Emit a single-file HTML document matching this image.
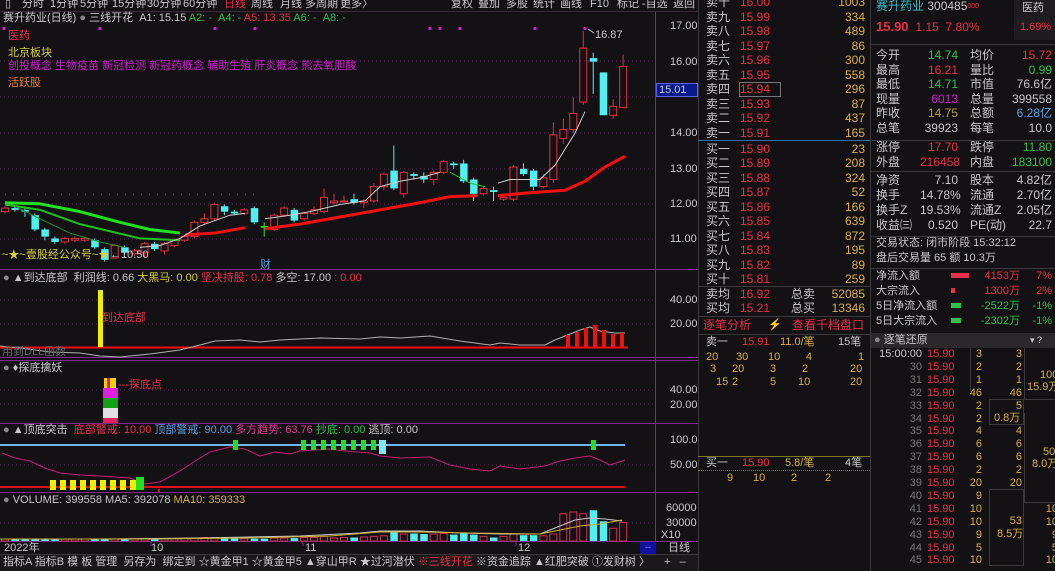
<!DOCTYPE html>
<html><head><meta charset="utf-8">
<style>
*{margin:0;padding:0;box-sizing:border-box}
body{width:1055px;height:571px;background:#131114;overflow:hidden;position:relative;font-family:"Liberation Sans","Noto Sans CJK SC",sans-serif;font-size:11px;color:#c8c8c8}
.t{position:absolute;white-space:nowrap;line-height:13px}
.r{color:#e8304a}.g{color:#2fbf4f}.y{color:#d8b048}.w{color:#c8c8c8}.c{color:#38c0c8}.m{color:#d020d0}.b{color:#5aa0e0}
.hl{position:absolute;height:1px}
.vl{position:absolute;width:1px}
.rt{text-align:right}
</style></head><body>
<div style="position:absolute;left:0;top:0;width:698px;height:12px;background:#131114"></div>
<div id="tb"></div>
<div class="hl" style="left:0;top:11px;width:698px;background:#3a2a3a"></div>

<svg id="ch" width="698" height="571" style="position:absolute;left:0;top:0"></svg>

<div class="t w" style="left:3px;top:12px">赛升药业(日线) <span style="color:#888">●</span> 三线开花 &nbsp;A1: 15.15 <span class="g">A2: - &nbsp;A4: -</span> <span class="r">A5: 13.35</span> <span class="g">A6: - &nbsp;A8: -</span></div>
<div class="t r" style="left:8px;top:30px">医药</div>
<div class="t" style="left:8px;top:47px;color:#d8d040">北京板块</div>
<div class="t m" style="left:8px;top:60px">创投概念 生物疫苗 新冠检测 新冠药概念 辅助生殖 肝炎概念 熊去氧胆酸</div>
<div class="t" style="left:8px;top:77px;color:#e08030">活跃股</div>
<div class="t w" style="left:595px;top:29px">16.87</div>
<div class="t" style="left:2px;top:249px;color:#d8d040">~★~壹股经公众号~★</div>
<div class="t w" style="left:110px;top:249px">←10.50</div>
<div class="t b" style="left:260px;top:259px">财</div>
<div class="t w" style="left:670px;top:20px">17.00</div>
<div class="t w" style="left:670px;top:56px">16.00</div>
<div style="position:absolute;left:656px;top:83px;width:42px;height:14px;background:#0a1a8a;border:1px solid #6060e0"></div>
<div class="t w" style="left:659px;top:84px">15.01</div>
<div class="t w" style="left:670px;top:127px">14.00</div>
<div class="t w" style="left:670px;top:163px">13.00</div>
<div class="t w" style="left:670px;top:198px">12.00</div>
<div class="t w" style="left:670px;top:233px">11.00</div>

<div class="t w" style="left:3px;top:272px"><span style="color:#888">●</span> ▲到达底部 &nbsp;利润线: 0.66 <span style="color:#d8d040">大黑马: 0.00</span> <span class="r">坚决持股: 0.78</span> 多空: 17.00 <span class="r">: 0.00</span></div>
<div class="t r" style="left:102px;top:312px">到达底部</div>
<div class="t" style="left:2px;top:346px;color:#666">用到DLL函数</div>
<div class="t w" style="left:670px;top:294px">40.00</div>
<div class="t w" style="left:670px;top:318px">20.00</div>
<div class="t w" style="left:3px;top:362px"><span style="color:#888">●</span> ♦探底擒妖</div>
<div class="t r" style="left:118px;top:379px">---探底点</div>
<div class="t w" style="left:670px;top:384px">40.00</div>
<div class="t w" style="left:670px;top:399px">20.00</div>
<div class="t w" style="left:3px;top:424px"><span style="color:#888">●</span> ▲顶底突击 &nbsp;<span class="r">底部警戒: 10.00</span> <span class="b">顶部警戒: 90.00</span> <span style="color:#e04090">多方趋势: 63.76</span> <span class="g">抄底: 0.00</span> 逃顶: 0.00</div>
<div class="t w" style="left:670px;top:434px">100.0</div>
<div class="t w" style="left:670px;top:459px">50.00</div>
<div class="t w" style="left:3px;top:494px"><span style="color:#888">●</span> VOLUME: 399558 MA5: 392078 <span class="y">MA10: 359333</span></div>
<div class="t w" style="left:666px;top:502px">60000</div>
<div class="t w" style="left:666px;top:517px">30000</div>
<div class="t w" style="left:661px;top:529px">X10</div>
<div class="t w" style="left:4px;top:542px">2022年</div>
<div class="t w" style="left:151px;top:542px">10</div>
<div class="t w" style="left:305px;top:542px">11</div>
<div class="t w" style="left:518px;top:542px">12</div>
<div style="position:absolute;left:640px;top:542px;width:16px;height:12px;background:#1010a0;color:#88f;font-size:9px;text-align:center">--</div>
<div class="t w" style="left:668px;top:542px">日线</div>
<div style="position:absolute;left:0;top:555px;width:698px;height:16px;background:#1a181b"></div>
<div class="t w" style="left:3px;top:556px">指标A 指标B 模 板 管理 &nbsp;另存为 &nbsp;绑定到 ☆黄金甲1 ☆黄金甲5 ▲穿山甲R ★过河潜伏 <span class="r">※三线开花</span> ※资金追踪 ▲红肥突破 ①发财树 〉</div>
<div class="t w" style="left:664px;top:556px">+ &nbsp; –</div>

<div class="vl" style="left:698px;top:0;height:571px;background:#3a3a3a"></div>
<div class="vl" style="left:870px;top:0;height:571px;background:#3a3a3a"></div>
<div id="ob"></div>
<div class="hl" style="left:698px;top:140px;width:172px;background:#3a6a9a"></div>
<div class="hl" style="left:698px;top:286px;width:172px;background:#3a3a3a"></div>
<div class="hl" style="left:698px;top:316px;width:172px;background:#3a3a3a"></div>
<div class="hl" style="left:698px;top:334px;width:172px;background:#3a3a3a"></div>
<div style="position:absolute;left:739px;top:82px;width:42px;height:15px;border:1px solid #777"></div>
<div class="t r" style="left:703px;top:319px;font-size:12px">逐笔分析</div>
<div class="t y" style="left:768px;top:319px">⚡</div>
<div class="t r" style="left:792px;top:319px;font-size:12px">查看千档盘口</div>
<div class="t w" style="left:706px;top:336px">卖一</div><div class="t r" style="left:742px;top:336px">15.91</div><div class="t y" style="left:780px;top:336px">11.0/笔</div><div class="t w" style="left:838px;top:336px">15笔</div>
<div class="t y" style="left:706px;top:351px;width:160px"><span style="position:absolute;left:0">20</span><span style="position:absolute;left:30px">30</span><span style="position:absolute;left:62px">10</span><span style="position:absolute;left:100px">4</span><span style="position:absolute;left:152px">1</span></div>
<div class="t y" style="left:710px;top:363px"><span style="position:absolute;left:0">3</span><span style="position:absolute;left:22px">20</span><span style="position:absolute;left:60px">3</span><span style="position:absolute;left:92px">2</span><span style="position:absolute;left:140px">20</span></div>
<div class="t y" style="left:720px;top:376px"><span style="position:absolute;left:-4px">15</span><span style="position:absolute;left:12px">2</span><span style="position:absolute;left:50px">5</span><span style="position:absolute;left:78px">10</span><span style="position:absolute;left:130px">20</span></div>
<div class="hl" style="left:698px;top:456px;width:172px;background:#7a7a20"></div>
<div class="hl" style="left:698px;top:470px;width:172px;border-top:1px dotted #7a7a20"></div>
<div class="t w" style="left:706px;top:457px">买一</div><div class="t r" style="left:742px;top:457px">15.90</div><div class="t y" style="left:785px;top:457px">5.8/笔</div><div class="t w" style="left:845px;top:457px">4笔</div>
<div class="t y" style="left:727px;top:472px">9</div><div class="t y" style="left:753px;top:472px">10</div><div class="t y" style="left:791px;top:472px">2</div><div class="t y" style="left:825px;top:472px">2</div>

<div class="t c" style="left:876px;top:0;font-size:12px">赛升药业 <span class="w">300485</span><span class="r" style="font-size:7px;vertical-align:top">000</span></div>
<div class="t r" style="left:876px;top:20px;font-size:13px;font-weight:bold">15.90 <span style="font-weight:normal;font-size:12px">&nbsp;1.15 &nbsp;7.80%</span></div>
<div style="position:absolute;left:1014px;top:0;width:41px;height:40px;background:#1e1c1f"></div>
<div class="t w" style="left:1022px;top:2px">医药</div>
<div class="t r" style="left:1020px;top:21px">1.69%</div>
<div class="hl" style="left:870px;top:44px;width:185px;background:#3a3a3a"></div>
<div id="info"></div>
<div class="hl" style="left:870px;top:140px;width:185px;background:#3a3a3a"></div>
<div class="hl" style="left:870px;top:171px;width:185px;background:#3a3a3a"></div>
<div class="hl" style="left:870px;top:236px;width:185px;background:#3a3a3a"></div>
<div class="t w" style="left:876px;top:237px">交易状态: 闭市阶段 15:32:12</div>
<div class="t w" style="left:876px;top:252px">盘后交易量 65 额 10.3万</div>
<div class="hl" style="left:870px;top:268px;width:185px;background:#3a3a3a"></div>
<div class="t w" style="left:876px;top:270px">净流入额</div><div style="position:absolute;left:951px;top:273px;width:18px;height:5px;background:#e8304a"></div><div class="t r rt" style="left:980px;width:40px;top:270px">4153万</div><div class="t r rt" style="left:1022px;width:30px;top:270px">7%</div>
<div class="t w" style="left:876px;top:285px">大宗流入</div><div style="position:absolute;left:951px;top:288px;width:4px;height:5px;background:#e8304a"></div><div class="t r rt" style="left:980px;width:40px;top:285px">1300万</div><div class="t r rt" style="left:1022px;width:30px;top:285px">2%</div>
<div class="t w" style="left:876px;top:300px">5日净流入额</div><div style="position:absolute;left:951px;top:303px;width:10px;height:5px;background:#2fbf4f"></div><div class="t g rt" style="left:970px;width:50px;top:300px">-2522万</div><div class="t g rt" style="left:1022px;width:30px;top:300px">-1%</div>
<div class="t w" style="left:876px;top:315px">5日大宗流入</div><div style="position:absolute;left:951px;top:318px;width:10px;height:5px;background:#2fbf4f"></div><div class="t g rt" style="left:970px;width:50px;top:315px">-2302万</div><div class="t g rt" style="left:1022px;width:30px;top:315px">-1%</div>
<div style="position:absolute;left:871px;top:333px;width:184px;height:15px;background:#2a282b"></div>
<div class="t w" style="left:874px;top:334px"><span style="color:#888">●</span> 逐笔还原</div>
<div class="t w" style="left:1030px;top:334px;font-size:9px">▾ ?</div>
<div id="tk"></div>
<div style="position:absolute;left:970px;top:348px;width:1px;height:45px;background:#3a3a3a"></div>
<div style="position:absolute;left:1024px;top:348px;width:31px;height:52px;border-left:1px solid #3a3a3a;border-bottom:1px solid #3a3a3a"></div>
<div style="position:absolute;left:989px;top:399px;width:35px;height:26px;border:1px solid #3a3a3a"></div>
<div style="position:absolute;left:989px;top:489px;width:35px;height:77px;border:1px solid #3a3a3a"></div>
<div style="position:absolute;left:1024px;top:413px;width:31px;height:90px;border-left:1px solid #3a3a3a;border-bottom:1px solid #3a3a3a"></div>
<div class="t y" style="left:1040px;top:369px">100</div><div class="t y" style="left:1027px;top:381px">15.9万</div>
<div class="t y rt" style="left:990px;width:32px;top:400px">5</div><div class="t y" style="left:994px;top:412px">0.8万</div>
<div class="t y" style="left:1043px;top:446px">50</div><div class="t y" style="left:1032px;top:458px">8.0万</div>
<div class="t y rt" style="left:990px;width:32px;top:515px">53</div><div class="t y" style="left:997px;top:528px">8.5万</div>

<script>
var tb='',TB=[['▯',5],['分时',22],['1分钟',50],['5分钟',80],['15分钟',112],['30分钟',147],['60分钟',183],['日线',224,1],['周线',251],['月线',280],['多周期',305],['更多〉',340],['复权',451],['叠加',478],['多股',506],['统计',533],['画线',560],['F10',590],['标记',617],['-自选',642],['返回',673]];
TB.forEach(function(a){tb+='<div class="t '+(a[2]?'r':'w')+'" style="left:'+a[1]+'px;top:-2px">'+a[0]+'</div>'});
document.getElementById('tb').innerHTML=tb;
var S=document.getElementById('ch'),h='';
function Y(p){return 26+(17-p)*35.7}
function L(x1,y1,x2,y2,c,w){h+='<line x1="'+x1+'" y1="'+y1+'" x2="'+x2+'" y2="'+y2+'" stroke="'+c+'" stroke-width="'+(w||1)+'"/>'}
function R(x,y,w,hh,f,s){h+='<rect x="'+x+'" y="'+y+'" width="'+w+'" height="'+Math.max(hh,1)+'" fill="'+(f||'none')+'" '+(s?'stroke="'+s+'"':'')+'/>'}
function P(pts,c,w){h+='<polyline points="'+pts.map(function(p){return p[0]+','+p[1]}).join(' ')+'" fill="none" stroke="'+c+'" stroke-width="'+w+'" stroke-linejoin="round"/>'}
[61,97,133,169,204,239].forEach(function(y){h+='<line x1="0" y1="'+y+'" x2="655" y2="'+y+'" stroke="#5a2a5a" stroke-dasharray="1,3"/>'});
L(655.5,12,655.5,555,'#7a2a8a');
[269,357,360,423,492].forEach(function(y){L(0,y+.5,698,y+.5,'#7a2a8a')});
L(0,541.5,698,541.5,'#7a2a8a');L(0,554.5,698,554.5,'#3a3a3a');
[300,324,390,404,465,523].forEach(function(y){h+='<line x1="0" y1="'+y+'" x2="655" y2="'+y+'" stroke="#5a2a5a" stroke-dasharray="1,3"/>'});
[151,303,516].forEach(function(x){L(x,541,x,546,'#7a2a8a')});
var D=[[11.8,11.9,11.95,11.75],[11.9,11.85,11.95,11.8],[11.85,11.8,11.9,11.65],[11.7,11.3,11.75,11.25],[11.3,11.1,11.35,11.0],[11.05,10.95,11.1,10.9],[10.95,11.05,11.1,10.9],[11.0,11.05,11.1,10.95],[11.0,11.05,11.1,10.95],[11.0,10.8,11.05,10.75],[10.75,10.45,10.8,10.4],[10.5,10.85,10.9,10.5],[10.8,10.65,10.85,10.6],[10.62,10.7,10.75,10.55],[10.65,10.9,10.95,10.5],[10.9,10.75,10.95,10.7],[10.7,10.9,10.95,10.6],[10.85,11.0,11.05,10.8],[11.0,11.1,11.15,10.95],[11.1,11.5,11.55,11.05],[11.5,11.6,11.75,11.45],[11.6,12.0,12.05,11.55],[11.95,11.8,12.0,11.7],[11.8,11.75,11.85,11.7],[11.75,11.85,11.9,11.7],[11.9,11.5,11.95,11.45],[11.4,11.35,11.5,11.1],[11.3,11.7,11.75,11.25],[11.7,11.9,11.95,11.65],[11.85,11.55,11.9,11.5],[11.6,11.75,11.8,11.55],[11.75,11.85,11.95,11.7],[11.8,12.2,12.45,11.75],[12.05,12.1,12.3,12.0],[12.1,12.1,12.25,12.05],[12.15,12.05,12.3,12.0],[12.05,12.1,12.15,11.9],[12.1,12.5,12.6,12.05],[12.5,12.85,12.9,12.4],[12.95,12.45,13.65,12.4],[12.3,12.9,12.95,12.2],[12.85,12.8,12.9,12.7],[12.8,12.7,12.9,12.6],[12.7,12.9,12.95,12.55],[12.9,13.2,13.25,12.85],[13.15,13.1,13.2,13.0],[13.15,12.65,13.25,12.6],[12.7,12.3,12.75,12.1],[12.3,12.45,12.5,12.25],[12.4,12.35,12.5,12.1],[12.15,12.2,12.25,12.1],[12.15,13.05,13.1,12.1],[13.0,12.85,13.15,12.8],[12.95,12.5,13.0,12.4],[12.5,12.75,12.85,12.45],[12.7,13.95,14.3,12.6],[13.85,14.1,14.4,13.7],[14.1,14.55,15.0,14.0],[14.87,16.38,16.87,14.8],[16.1,16.0,16.25,15.1],[15.7,14.5,15.7,14.5],[14.5,14.75,14.95,14.4],[14.72,15.87,16.2,14.72]];
var cx=[];
D.forEach(function(d,i){var x=5+i*9.97;cx.push(x);var up=d[1]>=d[0];var col=up?'#e03040':'#50f0f0';
 if(i==26)col='#30e030';
 var t=Y(Math.max(d[0],d[1])),b=Y(Math.min(d[0],d[1]));
 L(x,Y(d[2]),x,t,col);L(x,b,x,Y(d[3]),col);
 if(up)R(x-3.5,t,7,b-t,'none',col);else R(x-3.5,t,7.5,b-t,col);});
P([[5,Y(12.05)],[40,Y(12.02)],[80,Y(11.8)],[120,Y(11.5)],[150,Y(11.3)],[180,Y(11.2)]],'#20e020',3);
P([[5,Y(12.0)],[40,Y(11.85)],[80,Y(11.45)],[110,Y(11.25)],[140,Y(11.05)],[180,Y(11.0)]],'#20c020',2);
P([[15,Y(11.95)],[40,Y(11.6)],[70,Y(11.2)],[100,Y(10.95)],[125,Y(10.8)]],'#209020',1);
P([[185,Y(11.15)],[215,Y(11.2)],[245,Y(11.35)]],'#f01010',3);
P([[265,Y(11.32)],[300,Y(11.45)],[340,Y(11.65)],[380,Y(11.85)],[420,Y(12.05)],[450,Y(12.22)],[478,Y(12.25)]],'#f01010',3);
P([[498,Y(12.25)],[530,Y(12.33)],[565,Y(12.4)],[585,Y(12.65)],[605,Y(13.05)],[625,Y(13.35)]],'#f01010',3);
P([[140,Y(10.8)],[160,Y(10.85)],[180,Y(11.05)],[200,Y(11.4)],[230,Y(11.7)],[245,Y(11.75)]],'#d0d0d0',1);
P([[265,Y(11.6)],[290,Y(11.7)],[310,Y(11.8)],[340,Y(12.0)],[365,Y(12.1)],[380,Y(12.5)],[400,Y(12.65)],[420,Y(12.75)],[440,Y(12.9)]],'#d0d0d0',1);
P([[450,Y(12.9)],[470,Y(12.6)],[485,Y(12.5)]],'#20c020',1);
P([[498,Y(12.6)],[510,Y(12.7)],[540,Y(12.7)],[555,Y(13.1)],[575,Y(14.0)],[585,Y(14.6)]],'#d0d0d0',1);
for(var x=5;x<260;x+=8){R(x,Y(12.3),1,1,'#208020')}
[4,100,215,255,430,440,460,535,585].forEach(function(x){R(x-1.5,27,3,3,'#d020d0')});
L(588,29,594,33,'#ccc');
L(0,347.5,628,347.5,'#f01010',2);
R(98,290,5,57,'#f0f000');
P([[0,346],[20,348],[50,352],[80,353],[100,356],[120,357],[150,354],[180,350],[200,345],[215,341],[240,340],[260,342],[280,340],[320,338],[360,339],[380,337],[400,338],[430,336],[460,341],[490,345],[500,343],[520,345],[545,345],[555,340],[570,334],[580,330],[590,327],[600,331],[615,333],[625,333]],'#b0b0b0',1);
[[566,335],[575,332],[584,328],[593,325],[602,330],[611,334],[620,333]].forEach(function(a){R(a[0],a[1],4,347-a[1],'#f01010')});
R(104,378,12,10,'#f0d000');R(107,378,3,10,'#e02060');R(103,388,15,10,'#e020e0');R(103,398,15,10,'#10a010');R(103,408,15,10,'#e0e0e0');R(103,418,15,5,'#e02060');
L(0,445,625,445,'#70b8f0',2);L(0,487,625,487,'#e01010',2);
P([[2,453],[15,458],[30,461],[45,468],[60,473],[80,475],[100,476],[130,478],[145,484],[160,482],[180,471],[200,458],[210,452],[230,447],[245,449],[260,456],[275,452],[290,454],[300,451],[330,449],[345,451],[370,453],[380,456],[400,458],[430,457],[450,465],[470,469],[490,471],[500,466],[520,469],[545,466],[560,461],[575,458],[590,456],[600,460],[610,465],[625,460]],'#c02070',1);
for(var i=0;i<9;i++)R(50+i*10,480,6,10,'#f0f000');
R(136,477,8,13,'#20e020');
[233,301,311,321,331,341,351,361,371,591].forEach(function(x){R(x,440,5,10,'#20e020')});R(379,440,7,14,'#80e8f0');
R(158,489,2,3,'#e01010');
var V=[3,3,3,3,2,2,2,2,2,2,1,2,2,3,3,4,4,4,5,5,6,6,5,5,4,4,4,5,5,5,6,6,8,5,6,6,7,8,9,16,12,13,12,12,13,11,13,11,8,6,8,12,10,10,9,12,47,50,47,53,34,22,32];
V.forEach(function(v,i){var x=cx[i];var d=D[i];var up=d[1]>=d[0];var hh=Math.max(v*0.58,2);var col=up?'#d03050':'#50f0f0';
 if(up)R(x-3.5,541-hh,7,hh,'none',col);else R(x-3.5,541-hh,7.5,hh,col);});
P([[0,539],[100,539],[200,538],[300,536],[360,533],[380,531],[420,531],[460,533],[500,534],[540,534],[555,528],[575,520],[590,518],[605,519],[622,521]],'#c8c8c8',1);
P([[0,539],[150,539],[250,538],[330,536],[380,532],[420,532],[470,533],[540,534],[560,530],[580,526],[600,524],[622,520]],'#d0b030',1);
S.innerHTML=h;
var ob='',sp=[['卖十','16.00',1003],['卖九','15.99',334],['卖八','15.98',489],['卖七','15.97',86],['卖六','15.96',300],['卖五','15.95',558],['卖四','15.94',296],['卖三','15.93',87],['卖二','15.92',437],['卖一','15.91',165],['买一','15.90',23],['买二','15.89',208],['买三','15.88',324],['买四','15.87',52],['买五','15.86',166],['买六','15.85',639],['买七','15.84',872],['买八','15.83',195],['买九','15.82',89],['买十','15.81',259]];
sp.forEach(function(r,i){var y=-4+i*14.55+(i>=10?1:0);ob+='<div class="t w" style="left:706px;top:'+y+'px;font-size:12px">'+r[0]+'</div><div class="t r" style="left:740px;top:'+y+'px;font-size:12px">'+r[1]+'</div><div class="t y rt" style="left:810px;width:55px;top:'+y+'px;font-size:12px">'+r[2]+'</div>'});
ob+='<div class="t w" style="left:706px;top:288px;font-size:12px">卖均</div><div class="t r" style="left:740px;top:288px;font-size:12px">16.92</div><div class="t w" style="left:791px;top:288px;font-size:12px">总卖</div><div class="t y rt" style="left:820px;width:45px;top:288px;font-size:12px">52085</div>';
ob+='<div class="t w" style="left:706px;top:302px;font-size:12px">买均</div><div class="t r" style="left:740px;top:302px;font-size:12px">15.21</div><div class="t w" style="left:791px;top:302px;font-size:12px">总买</div><div class="t y rt" style="left:820px;width:45px;top:302px;font-size:12px">13346</div>';
document.getElementById('ob').innerHTML=ob;
var I=[['今开','14.74','g','均价','15.72','r'],['最高','16.21','r','量比','0.99','g'],['最低','14.71','g','市值','76.6亿','w'],['现量','6013','m','总量','399558','w'],['昨收','14.75','y2','总额','6.28亿','b'],['总笔','39923','w','每笔','10.0','w'],['涨停','17.70','r','跌停','11.80','g'],['外盘','216458','r','内盘','183100','g'],['净资','7.10','w','股本','4.82亿','w'],['换手','14.78%','w','流通','2.70亿','w'],['换手Z','19.53%','w','流通Z','2.05亿','w'],['收益㈢','0.520','w','PE(动)','22.7','w']];
var ys=[49,64,78,93,107,122,141,156,174,189,204,219],s='';
I.forEach(function(r,i){var y=ys[i];
s+='<div class="t w" style="left:876px;top:'+y+'px;font-size:12px">'+r[0]+'</div><div class="t '+r[2]+' rt" style="left:920px;width:38px;top:'+y+'px;font-size:12px;'+(r[2]=='y2'?'color:#b0a030':'')+'">'+r[1]+'</div><div class="t w" style="left:970px;top:'+y+'px;font-size:12px">'+r[3]+'</div><div class="t '+r[5]+' rt" style="left:1000px;width:52px;top:'+y+'px;font-size:12px">'+r[4]+'</div>'});
document.getElementById('info').innerHTML=s;
var T=[['15:00:00',3,3],['30',2,2],['31',1,1],['32',46,46],['33',2,''],['34',2,''],['35',4,4],['36',6,6],['37',6,6],['38',2,2],['39',20,20],['40',9,''],['41',10,''],['42',10,''],['43',9,''],['44',5,''],['45',10,'']],t='';
var rc=['','','','','','','','','','','','','10','10','9','5','10'];
T.forEach(function(r,i){var y=348+i*12.9;t+='<div class="t rt" style="left:872px;width:50px;top:'+y+'px;color:'+(i==0?'#c8c8c8':'#777')+'">'+r[0]+'</div><div class="t r" style="left:927px;top:'+y+'px">15.90</div><div class="t y rt" style="left:960px;width:22px;top:'+y+'px">'+r[1]+'</div><div class="t y rt" style="left:990px;width:32px;top:'+y+'px">'+r[2]+'</div>'+(rc[i]?'<div class="t y rt" style="left:1030px;width:28px;top:'+y+'px">'+rc[i]+'</div>':'')});
document.getElementById('tk').innerHTML=t;
</script>
</body></html>
